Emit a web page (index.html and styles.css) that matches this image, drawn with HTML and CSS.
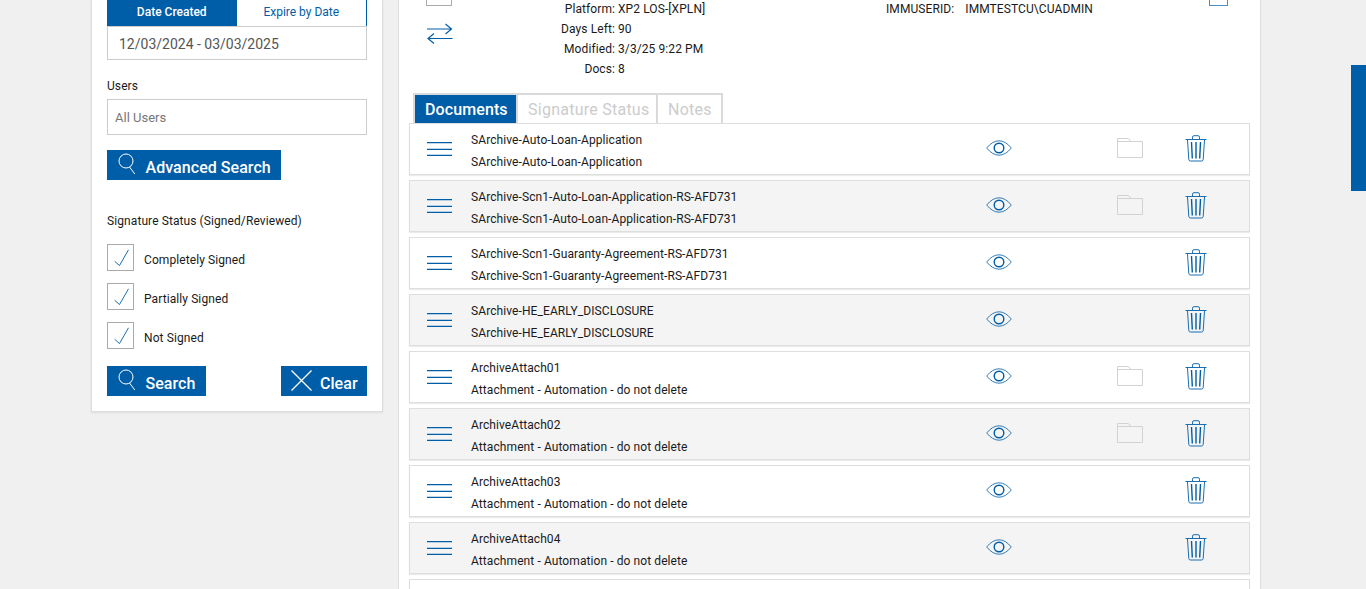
FILE: index.html
```html
<!DOCTYPE html>
<html lang="en">
<head>
    <meta charset="UTF-8">
    <meta name="viewport" content="width=device-width, initial-scale=1.0">
    <title>Documents</title>
    <link rel="stylesheet" href="styles.css">
</head>
<body>
    <svg class="sprite">
        <symbol id="lines" viewBox="0 0 26 16"><path d="M0 1.700h25M0 8.300h25M0 14.300h25" stroke-width="1.300"/></symbol>
        <symbol id="eye" viewBox="0 0 26 16"><path d="M.7 8Q6.5.8 13 .8T25.3 8Q19.5 15.2 13 15.2T.7 8z" stroke-width=".8"/><circle cx="13" cy="8" r="4.8" stroke-width="1.4"/></symbol>
        <symbol id="folder" viewBox="0 0 26 22"><path d="M.5 20.500V1.500h10.500l3.500 3H25.500v16zM.5 4.500h14"/></symbol>
        <symbol id="trash" viewBox="0 0 22 27"><path d="M.5 4.500h21M7.500 4V2.200Q7.500.7 9 .7h4Q14.500.7 14.500 2.200V4M2.500 5l1.300 19.500Q4 26 5.500 26h11q1.500 0 1.700-1.500L19.500 5"/><path d="M6.500 7l.8 16.500M11 7v16.500M15.500 7l-.8 16.500" stroke-width="1.400"/></symbol>
        <symbol id="glass" viewBox="0 0 18 22"><circle cx="8" cy="8" r="7"/><path d="M11.500 14l5.300 7"/></symbol>
        <symbol id="cross" viewBox="0 0 21 21"><path d="M.5.5l20 20M20.500.5l-20 20"/></symbol>
        <symbol id="check" viewBox="0 0 15 18"><path d="M.7 12.300l4.800 4.200L14.500.8"/></symbol>
        <symbol id="swap" viewBox="0 0 26 21"><path d="M0 6h24.500M18.500 1l6 5-6 5M25.500 15.500H1M7 10.500l-6 5 6 5"/></symbol>
    </svg>

    <div class="page">
        <aside class="sidebar">
            <div class="date-tabs">
                <div class="date-tab active">Date Created</div>
                <div class="date-tab">Expire by Date</div>
            </div>
            <div class="field date-range">12/03/2024 - 03/03/2025</div>
            <div class="label">Users</div>
            <div class="field users">All Users</div>
            <button class="btn advanced"><svg class="glass"><use href="#glass"/></svg><span>Advanced Search</span></button>
            <div class="label status">Signature Status (Signed/Reviewed)</div>
            <div class="check-row"><span class="box"><svg><use href="#check"/></svg></span><span class="check-text">Completely Signed</span></div>
            <div class="check-row"><span class="box"><svg><use href="#check"/></svg></span><span class="check-text">Partially Signed</span></div>
            <div class="check-row"><span class="box"><svg><use href="#check"/></svg></span><span class="check-text">Not Signed</span></div>
            <div class="actions">
                <button class="btn"><svg class="glass"><use href="#glass"/></svg><span>Search</span></button>
                <button class="btn clear"><svg class="cross"><use href="#cross"/></svg><span>Clear</span></button>
            </div>
        </aside>

        <main class="content">
            <div class="info">
                <div class="info-icons">
                    <div class="select-box"></div>
                    <svg class="swap"><use href="#swap"/></svg>
                </div>
                <dl class="details">
                    <dt>Platform:</dt><dd>XP2 LOS-[XPLN]</dd>
                    <dt>Days Left:</dt><dd>90</dd>
                    <dt>Modified:</dt><dd>3/3/25 9:22 PM</dd>
                    <dt>Docs:</dt><dd>8</dd>
                </dl>
                <div class="user"><span>IMMUSERID:</span><span>IMMTESTCU\CUADMIN</span></div>
                <div class="corner"></div>
            </div>

            <div class="tabs">
                <div class="tab active">Documents</div>
                <div class="tab">Signature Status</div>
                <div class="tab">Notes</div>
            </div>

            <div class="docs">
                <div class="doc">
                    <svg class="lines"><use href="#lines"/></svg>
                    <div class="doc-text"><div>SArchive-Auto-Loan-Application</div><div>SArchive-Auto-Loan-Application</div></div>
                    <svg class="eye"><use href="#eye"/></svg>
                    <svg class="folder"><use href="#folder"/></svg>
                    <svg class="trash"><use href="#trash"/></svg>
                </div>
                <div class="doc">
                    <svg class="lines"><use href="#lines"/></svg>
                    <div class="doc-text"><div>SArchive-Scn1-Auto-Loan-Application-RS-AFD731</div><div>SArchive-Scn1-Auto-Loan-Application-RS-AFD731</div></div>
                    <svg class="eye"><use href="#eye"/></svg>
                    <svg class="folder"><use href="#folder"/></svg>
                    <svg class="trash"><use href="#trash"/></svg>
                </div>
                <div class="doc">
                    <svg class="lines"><use href="#lines"/></svg>
                    <div class="doc-text"><div>SArchive-Scn1-Guaranty-Agreement-RS-AFD731</div><div>SArchive-Scn1-Guaranty-Agreement-RS-AFD731</div></div>
                    <svg class="eye"><use href="#eye"/></svg>
                    <svg class="trash"><use href="#trash"/></svg>
                </div>
                <div class="doc">
                    <svg class="lines"><use href="#lines"/></svg>
                    <div class="doc-text"><div>SArchive-HE_EARLY_DISCLOSURE</div><div>SArchive-HE_EARLY_DISCLOSURE</div></div>
                    <svg class="eye"><use href="#eye"/></svg>
                    <svg class="trash"><use href="#trash"/></svg>
                </div>
                <div class="doc">
                    <svg class="lines"><use href="#lines"/></svg>
                    <div class="doc-text"><div>ArchiveAttach01</div><div>Attachment - Automation - do not delete</div></div>
                    <svg class="eye"><use href="#eye"/></svg>
                    <svg class="folder"><use href="#folder"/></svg>
                    <svg class="trash"><use href="#trash"/></svg>
                </div>
                <div class="doc">
                    <svg class="lines"><use href="#lines"/></svg>
                    <div class="doc-text"><div>ArchiveAttach02</div><div>Attachment - Automation - do not delete</div></div>
                    <svg class="eye"><use href="#eye"/></svg>
                    <svg class="folder"><use href="#folder"/></svg>
                    <svg class="trash"><use href="#trash"/></svg>
                </div>
                <div class="doc">
                    <svg class="lines"><use href="#lines"/></svg>
                    <div class="doc-text"><div>ArchiveAttach03</div><div>Attachment - Automation - do not delete</div></div>
                    <svg class="eye"><use href="#eye"/></svg>
                    <svg class="trash"><use href="#trash"/></svg>
                </div>
                <div class="doc">
                    <svg class="lines"><use href="#lines"/></svg>
                    <div class="doc-text"><div>ArchiveAttach04</div><div>Attachment - Automation - do not delete</div></div>
                    <svg class="eye"><use href="#eye"/></svg>
                    <svg class="trash"><use href="#trash"/></svg>
                </div>
                <div class="doc"></div>
            </div>
        </main>
        <div class="side-tab"></div>
    </div>
</body>
</html>
```
FILE: styles.css
```css
* {
    box-sizing: border-box;
}
body {
    margin: 0;
    height: 589px;
    overflow: hidden;
    background: #f0f0f0;
    color: #1a1a1a;
    font-family: Roboto, sans-serif;
    font-size: 12px;
    letter-spacing: 0.09px;
}
svg {
    display: block;
    fill: none;
    stroke: #005da8;
}
.sprite {
    display: none;
}
.page {
    display: flex;
    align-items: flex-start;
    height: 589px;
    padding-left: 91px;
    overflow: hidden;
}

/* search panel */
.sidebar {
    width: 292px;
    height: 412px;
    padding: 0 15px;
    background: #fff;
    border: 1px solid #dedede;
    border-top: none;
    box-shadow: 0 1px 2px rgba(0, 0, 0, 0.08);
}
.date-tabs {
    display: flex;
    height: 26px;
    letter-spacing: 0;
}
.date-tab {
    flex: 1;
    line-height: 24px;
    text-align: center;
    color: #005da8;
    border-right: 1px solid #005da8;
}
.date-tab.active {
    background: #005da8;
    color: #fff;
    font-weight: 500;
    border-right: none;
}
.field {
    border: 1px solid #ccc;
    background: #fff;
    letter-spacing: 0;
}
.date-range {
    height: 34px;
    padding-left: 11px;
    font-size: 14px;
    line-height: 34px;
    color: #555;
}
.label {
    margin-top: 18px;
    height: 16px;
    line-height: 16px;
}
.users {
    height: 36px;
    margin-top: 5px;
    padding-left: 7px;
    font-size: 13px;
    line-height: 35px;
    color: #777;
}
.btn {
    display: flex;
    width: 99px;
    height: 30px;
    padding: 3px 0 0 11px;
    border: none;
    background: #005da8;
    color: #fff;
    font-family: inherit;
    font-size: 16px;
    font-weight: 500;
    letter-spacing: 0.05px;
    line-height: 29px;
    white-space: nowrap;
}
.btn svg {
    flex: none;
    stroke: #fff;
}
.btn .glass {
    width: 18px;
    height: 22px;
    margin-right: 9.5px;
}
.advanced {
    width: 174px;
    margin-top: 15px;
}
.status {
    margin-top: 33px;
    margin-bottom: 15px;
}
.check-row {
    display: flex;
    height: 27px;
    margin-bottom: 12px;
}
.box {
    width: 27px;
    height: 27px;
    margin-right: 10px;
    padding: 4px 0 0 6px;
    border: 1px solid #aaa;
}
.box svg {
    width: 15px;
    height: 18px;
    stroke-width: 0.9;
}
.check-text {
    line-height: 32px;
}
.actions {
    display: flex;
    justify-content: space-between;
    margin-top: 17px;
}
.clear {
    width: 86px;
    padding: 3px 0 0 10px;
}
.clear .cross {
    width: 21px;
    height: 21px;
    margin: 1px 8px 0 0;
    stroke-width: 1.3;
}

/* package details */
.content {
    width: 863px;
    height: 600px;
    margin-left: 15px;
    padding: 0 10px;
    background: #fff;
    border: 1px solid #dedede;
    border-top: none;
}
.info {
    display: flex;
    height: 93px;
}
.info-icons {
    width: 129px;
    padding-left: 17px;
}
.select-box {
    width: 26px;
    height: 6px;
    border: 1px solid #aaa;
    border-top: none;
}
.swap {
    width: 26px;
    height: 21px;
    margin: 17px 0 0 1px;
    stroke-width: 1.2;
}
.details {
    display: grid;
    grid-template-columns: 77px 1fr;
    grid-auto-rows: 20px;
    column-gap: 3px;
    width: 348px;
    margin: -1px 0 0;
    line-height: 20px;
}
.details dt {
    text-align: right;
}
.details dd {
    margin: 0;
}
.user {
    display: flex;
    gap: 11px;
    width: 323px;
    margin-top: -1px;
    line-height: 20px;
}
.corner {
    width: 19px;
    height: 6px;
    border: 1px solid #4a8fc4;
    border-top: none;
}

/* tabs */
.tabs {
    display: flex;
    width: 310px;
    height: 30px;
    margin-left: 4px;
    border: 2px solid #dadada;
    border-bottom: none;
}
.tab {
    flex: none;
    width: 140px;
    padding-left: 10px;
    border-right: 2px solid #dadada;
    font-size: 16px;
    letter-spacing: 0.25px;
    line-height: 29px;
    color: #ccc;
}
.tab:last-child {
    width: 64px;
    border-right: none;
}
.tab.active {
    width: 103px;
    background: #005da8;
    color: #fff;
    font-weight: 500;
    letter-spacing: 0.1px;
}

/* documents list */
.docs {
    display: flex;
    flex-direction: column;
    gap: 5px;
}
.doc {
    display: grid;
    grid-template-columns: 44px 515px 131px 67px 1fr;
    flex: none;
    height: 52px;
    padding-left: 17px;
    border: 1px solid #dedede;
    box-shadow: 0 1px 1px rgba(0, 0, 0, 0.08);
}
.doc:nth-child(even) {
    background: #f4f4f4;
}
.doc-text {
    padding-top: 5px;
    line-height: 22px;
}
.lines {
    width: 26px;
    height: 16px;
    margin-top: 17px;
}
.eye {
    width: 26px;
    height: 16px;
    margin-top: 16px;
    margin-left: -0.5px;
}
.folder {
    width: 26px;
    height: 22px;
    margin-top: 13px;
    stroke: #d2d2d2;
}
.trash {
    grid-column: 5;
    width: 22px;
    height: 27px;
    margin-top: 11px;
    margin-left: 0.5px;
    stroke-width: 0.9;
}

/* blue handle at the window edge */
.side-tab {
    width: 15px;
    height: 126px;
    margin: 65px 0 0 auto;
    background: #005da8;
}
```
